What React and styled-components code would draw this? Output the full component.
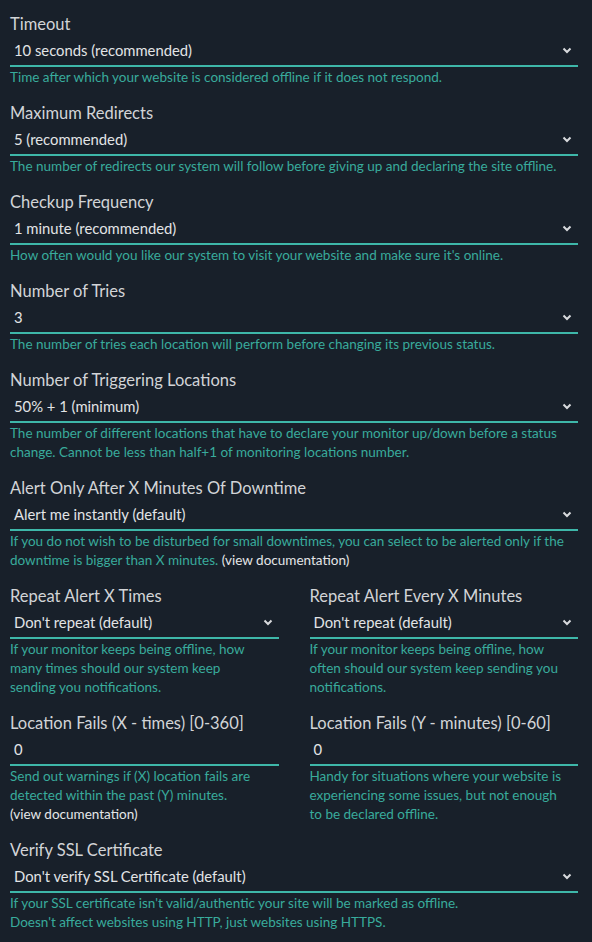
import React from "react"
import styled, { createGlobalStyle } from "styled-components"

const GlobalStyle = createGlobalStyle`
  html, body {
    margin: 0;
    padding: 0;
    background: #18202a;
  }
  body {
    font-family: Lato, "Open Sans", sans-serif;
    color: #d4d6d9;
  }
`

const Page = styled.div`
  padding: 13px 14px 0 10px;
  min-height: 942px;
  box-sizing: border-box;
  background: #18202a;
`

const Row = styled.div`
  display: grid;
  grid-template-columns: 1fr 1fr;
  column-gap: 31px;
`

const Field = styled.div`
  margin-bottom: 15px;
`

const Label = styled.div`
  font-size: 16.5px;
  line-height: 22px;
  color: #d2d4d7;
`

const Control = styled.div`
  display: flex;
  align-items: center;
  justify-content: space-between;
  height: 30px;
  padding: 0 4px;
  border-bottom: 2px solid #3eb7a9;
  font-size: 14.8px;
  color: #e2e4e6;
`

const Help = styled.div`
  margin-top: 1px;
  padding-right: ${(p) => (p.$half ? "11px" : "6px")};
  font-size: 13.5px;
  line-height: 19px;
  color: #38ab9c;
`

const DocLink = styled.span`
  display: ${(p) => (p.$block ? "block" : "inline")};
  color: #e4e6e8;
`

const Chevron = () => (
  <svg width="10" height="7" viewBox="0 0 10 7" style={{ marginRight: 2 }}>
    <path d="M1.5 1.5 L5 5 L8.5 1.5" fill="none" stroke="#d8dadd" strokeWidth="2" />
  </svg>
)

function Setting({ label, value, select = true, half = false, children }) {
  return (
    <Field>
      <Label>{label}</Label>
      <Control>
        <span>{value}</span>
        {select && <Chevron />}
      </Control>
      <Help $half={half}>{children}</Help>
    </Field>
  )
}

export default function App() {
  return (
    <>
      <GlobalStyle />
      <Page>
        <Setting label="Timeout" value="10 seconds (recommended)">
          Time after which your website is considered offline if it does not respond.
        </Setting>
        <Setting label="Maximum Redirects" value="5 (recommended)">
          The number of redirects our system will follow before giving up and declaring the site offline.
        </Setting>
        <Setting label="Checkup Frequency" value="1 minute (recommended)">
          How often would you like our system to visit your website and make sure it's online.
        </Setting>
        <Setting label="Number of Tries" value="3">
          The number of tries each location will perform before changing its previous status.
        </Setting>
        <Setting label="Number of Triggering Locations" value="50% + 1 (minimum)">
          The number of different locations that have to declare your monitor up/down before a status
          change. Cannot be less than half+1 of monitoring locations number.
        </Setting>
        <Setting label="Alert Only After X Minutes Of Downtime" value="Alert me instantly (default)">
          If you do not wish to be disturbed for small downtimes, you can select to be alerted only if the
          downtime is bigger than X minutes. <DocLink>(view documentation)</DocLink>
        </Setting>
        <Row>
          <Setting half label="Repeat Alert X Times" value="Don't repeat (default)">
            If your monitor keeps being offline, how many times should our system keep sending you
            notifications.
          </Setting>
          <Setting half label="Repeat Alert Every X Minutes" value="Don't repeat (default)">
            If your monitor keeps being offline, how often should our system keep sending you
            notifications.
          </Setting>
        </Row>
        <Row>
          <Setting half label="Location Fails (X - times) [0-360]" value="0" select={false}>
            Send out warnings if (X) location fails are detected within the past (Y) minutes.
            <DocLink $block>(view documentation)</DocLink>
          </Setting>
          <Setting half label="Location Fails (Y - minutes) [0-60]" value="0" select={false}>
            Handy for situations where your website is experiencing some issues, but not enough to be
            declared offline.
          </Setting>
        </Row>
        <Setting label="Verify SSL Certificate" value="Don't verify SSL Certificate (default)">
          If your SSL certificate isn't valid/authentic your site will be marked as offline.
          <br />
          Doesn't affect websites using HTTP, just websites using HTTPS.
        </Setting>
      </Page>
    </>
  )
}
